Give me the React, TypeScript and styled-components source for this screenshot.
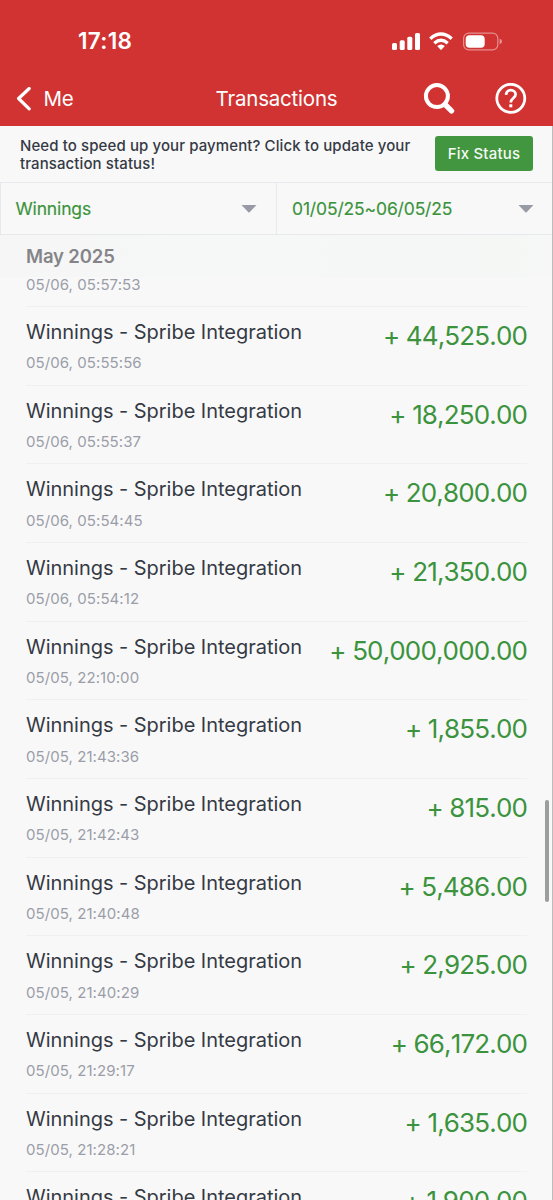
import React from "react";
import styled, { createGlobalStyle } from "styled-components";

const GlobalStyle = createGlobalStyle`
  * { box-sizing: border-box; }
  body { margin: 0; background: #f8f8f8; }
`;

const Screen = styled.div`
  position: relative;
  display: flex;
  flex-direction: column;
  width: 553px;
  height: 1200px;
  overflow: hidden;
  background: #f8f8f8;
  font-family: Inter, "Liberation Sans", sans-serif;
  color: #353a45;
`;

const Header = styled.header`
  flex: none;
  height: 126px;
  background: #d13332;
  color: #fff;
`;

const StatusBar = styled.div`
  display: flex;
  justify-content: space-between;
  align-items: center;
  height: 71px;
  padding: 11px 51px 0 78px;
`;

const Clock = styled.span`
  font-size: 22.5px;
  line-height: 26px;
  font-weight: 600;
  letter-spacing: 0.3px;
`;

const StatusIcons = styled.div`
  display: flex;
  align-items: center;
  svg { display: block; }
`;

const NavBar = styled.nav`
  display: grid;
  grid-template-columns: 1fr auto 1fr;
  align-items: center;
  height: 55px;
  padding: 0 26px 0 16px;
  svg { display: block; }
`;

const Back = styled.div`
  display: flex;
  align-items: center;
  gap: 11.5px;
  font-size: 20.5px;
  line-height: 26px;
  letter-spacing: -0.3px;
`;

const Title = styled.h1`
  margin: 0 0 0 10px;
  font-size: 20.5px;
  line-height: 26px;
  font-weight: 400;
  letter-spacing: -0.2px;
`;

const Actions = styled.div`
  display: flex;
  justify-content: flex-end;
  align-items: center;
  gap: 40px;
`;

const Notice = styled.section`
  flex: none;
  display: flex;
  justify-content: space-between;
  height: 56px;
  padding: 10px 20px 0 20px;
`;

const NoticeText = styled.p`
  margin: 1px 0 0;
  font-size: 15px;
  line-height: 17.5px;
  font-weight: 500;
  letter-spacing: 0.1px;
  white-space: nowrap;
`;

const FixButton = styled.button`
  width: 98px;
  height: 35px;
  padding: 0;
  border: 0;
  border-radius: 3px;
  background: #42963f;
  color: #f4faf4;
  font: 500 15px/20px Inter, "Liberation Sans", sans-serif;
  letter-spacing: 0.2px;
`;

const Filters = styled.div`
  flex: none;
  display: grid;
  grid-template-columns: 275px 277px;
  height: 53px;
  border: 1px solid #e8e9ec;
  border-right: 0;
`;

const Filter = styled.div<{ $divided?: boolean }>`
  display: flex;
  justify-content: space-between;
  align-items: center;
  padding: 0 19px 0 ${(p) => (p.$divided ? 15 : 14.5)}px;
  border-left: ${(p) => (p.$divided ? "1px solid #e8e9ec" : "0")};
  color: #3b933d;
  font-size: 17.5px;
  line-height: 22px;
  letter-spacing: -0.15px;
  font-weight: 400;
  -webkit-text-stroke: 0.15px currentColor;
`;

const Month = styled.h2`
  flex: none;
  margin: 0;
  height: 42px;
  padding: 9px 26px 0;
  background: linear-gradient(90deg, #f6f6f7 0%, #f6f7f7 50%, #f4f7f5 80%, #f6f7f6 100%);
  color: #858589;
  font-size: 18.5px;
  line-height: 24px;
  font-weight: 600;
  letter-spacing: -0.15px;
`;

const List = styled.div`
  flex: 1;
  min-height: 0;
  overflow: hidden;
  padding: 0 26px;
`;

const Row = styled.div<{ $clipped?: boolean }>`
  display: flex;
  justify-content: space-between;
  align-items: flex-start;
  height: ${(p) => (p.$clipped ? 30.07 : 78.67)}px;
  border-bottom: 1px solid #f0f0f3;
`;

const Name = styled.div`
  margin-top: 13px;
  font-size: 20px;
  line-height: 24px;
  letter-spacing: -0.03px;
`;

const Stamp = styled.div<{ $clipped?: boolean }>`
  margin-top: ${(p) => (p.$clipped ? -1 : 10.3)}px;
  color: #9b9ea8;
  font-size: 15px;
  line-height: 18px;
  letter-spacing: 0.07px;
`;

const Amount = styled.div`
  margin-top: 13px;
  color: #3b933d;
  font-size: 26px;
  line-height: 32px;
  letter-spacing: -0.85px;
  font-kerning: none;
`;

const ScrollThumb = styled.div`
  position: absolute;
  top: 800px;
  right: 4px;
  width: 4px;
  height: 102px;
  border-radius: 2px;
  background: #9b9d9e;
`;

const EdgeLine = styled.div`
  position: absolute;
  top: 126px;
  right: 0;
  bottom: 0;
  width: 1px;
  background: #bcbcbd;
`;

const transactions: { stamp?: string; amount: string }[] = [
  { stamp: "05/06, 05:55:56", amount: "44,525.00" },
  { stamp: "05/06, 05:55:37", amount: "18,250.00" },
  { stamp: "05/06, 05:54:45", amount: "20,800.00" },
  { stamp: "05/06, 05:54:12", amount: "21,350.00" },
  { stamp: "05/05, 22:10:00", amount: "50,000,000.00" },
  { stamp: "05/05, 21:43:36", amount: "1,855.00" },
  { stamp: "05/05, 21:42:43", amount: "815.00" },
  { stamp: "05/05, 21:40:48", amount: "5,486.00" },
  { stamp: "05/05, 21:40:29", amount: "2,925.00" },
  { stamp: "05/05, 21:29:17", amount: "66,172.00" },
  { stamp: "05/05, 21:28:21", amount: "1,635.00" },
  { amount: "1,900.00" },
];

const Caret = () => (
  <svg width="16" height="8" viewBox="0 0 16 8">
    <path d="M0.5 0H15.5L8.6 7.2Q8 7.8 7.4 7.2Z" fill="#989aa6" />
  </svg>
);

export default function App() {
  return (
    <Screen>
      <GlobalStyle />
      <Header>
        <StatusBar>
          <Clock>17:18</Clock>
          <StatusIcons>
            <svg width="110" height="20" viewBox="392 30 110 20" fill="#fff">
              <rect x="392" y="42" width="5" height="7" rx="1.5" />
              <rect x="399.7" y="39.2" width="5" height="9.8" rx="1.5" />
              <rect x="407.3" y="35.8" width="5" height="13.2" rx="1.5" />
              <rect x="415" y="32" width="5" height="17" rx="1.5" />
              <g fill="none" stroke="#fff" strokeWidth="3.4">
                <path d="M430.3 37.7Q441 28.5 451.7 37.7" />
                <path d="M434.3 42.2Q441 36.4 447.7 42.2" />
              </g>
              <path d="M437.2 45Q441 41.9 444.8 45L441.7 48.4Q441 49 440.3 48.4Z" />
              <rect x="463.6" y="32.1" width="34.2" height="16.8" rx="5.2" fill="none" stroke="#fff" strokeOpacity="0.45" strokeWidth="1.2" />
              <rect x="465.7" y="34.2" width="19" height="12.6" rx="3.8" />
              <path d="M499.7 37.8Q502 38.6 502 40.5T499.7 43.2Z" fillOpacity="0.5" />
            </svg>
          </StatusIcons>
        </StatusBar>
        <NavBar>
          <Back>
            <svg width="16" height="24" viewBox="0 0 16 24" fill="none" stroke="#fff" strokeWidth="3.2" strokeLinecap="round" strokeLinejoin="round">
              <path d="M13.2 1.5L2.6 11.5L13.2 21.8" />
            </svg>
            Me
          </Back>
          <Title>Transactions</Title>
          <Actions>
            <svg width="32" height="32" viewBox="0 0 32 32" fill="none" stroke="#fff">
              <circle cx="13.9" cy="13.1" r="11" strokeWidth="4" />
              <path d="M22 21.3L28.5 27.8" strokeWidth="5.4" strokeLinecap="round" />
            </svg>
            <svg width="32" height="32" viewBox="0 0 32 32" fill="none" stroke="#fff">
              <circle cx="15.8" cy="15.3" r="14" strokeWidth="2.8" />
              <path d="M11 11.8C11.3 8.6 13.1 7.2 15.8 7.2C18.6 7.2 20.6 9 20.6 11.5C20.6 14.9 15.8 15.1 15.8 19.4" strokeWidth="2.7" />
              <rect x="14.3" y="21.3" width="3" height="3" fill="#fff" stroke="none" />
            </svg>
          </Actions>
        </NavBar>
      </Header>
      <Notice>
        <NoticeText>
          Need to speed up your payment? Click to update your
          <br />
          transaction status!
        </NoticeText>
        <FixButton>Fix Status</FixButton>
      </Notice>
      <Filters>
        <Filter>
          Winnings
          <Caret />
        </Filter>
        <Filter $divided>
          01/05/25~06/05/25
          <Caret />
        </Filter>
      </Filters>
      <Month>May 2025</Month>
      <List>
        <Row $clipped>
          <Stamp $clipped>05/06, 05:57:53</Stamp>
        </Row>
        {transactions.map(({ stamp, amount }, i) => (
          <Row key={i}>
            <div>
              <Name>Winnings - Spribe Integration</Name>
              {stamp && <Stamp>{stamp}</Stamp>}
            </div>
            <Amount>+ {amount}</Amount>
          </Row>
        ))}
      </List>
      <ScrollThumb />
      <EdgeLine />
    </Screen>
  );
}
